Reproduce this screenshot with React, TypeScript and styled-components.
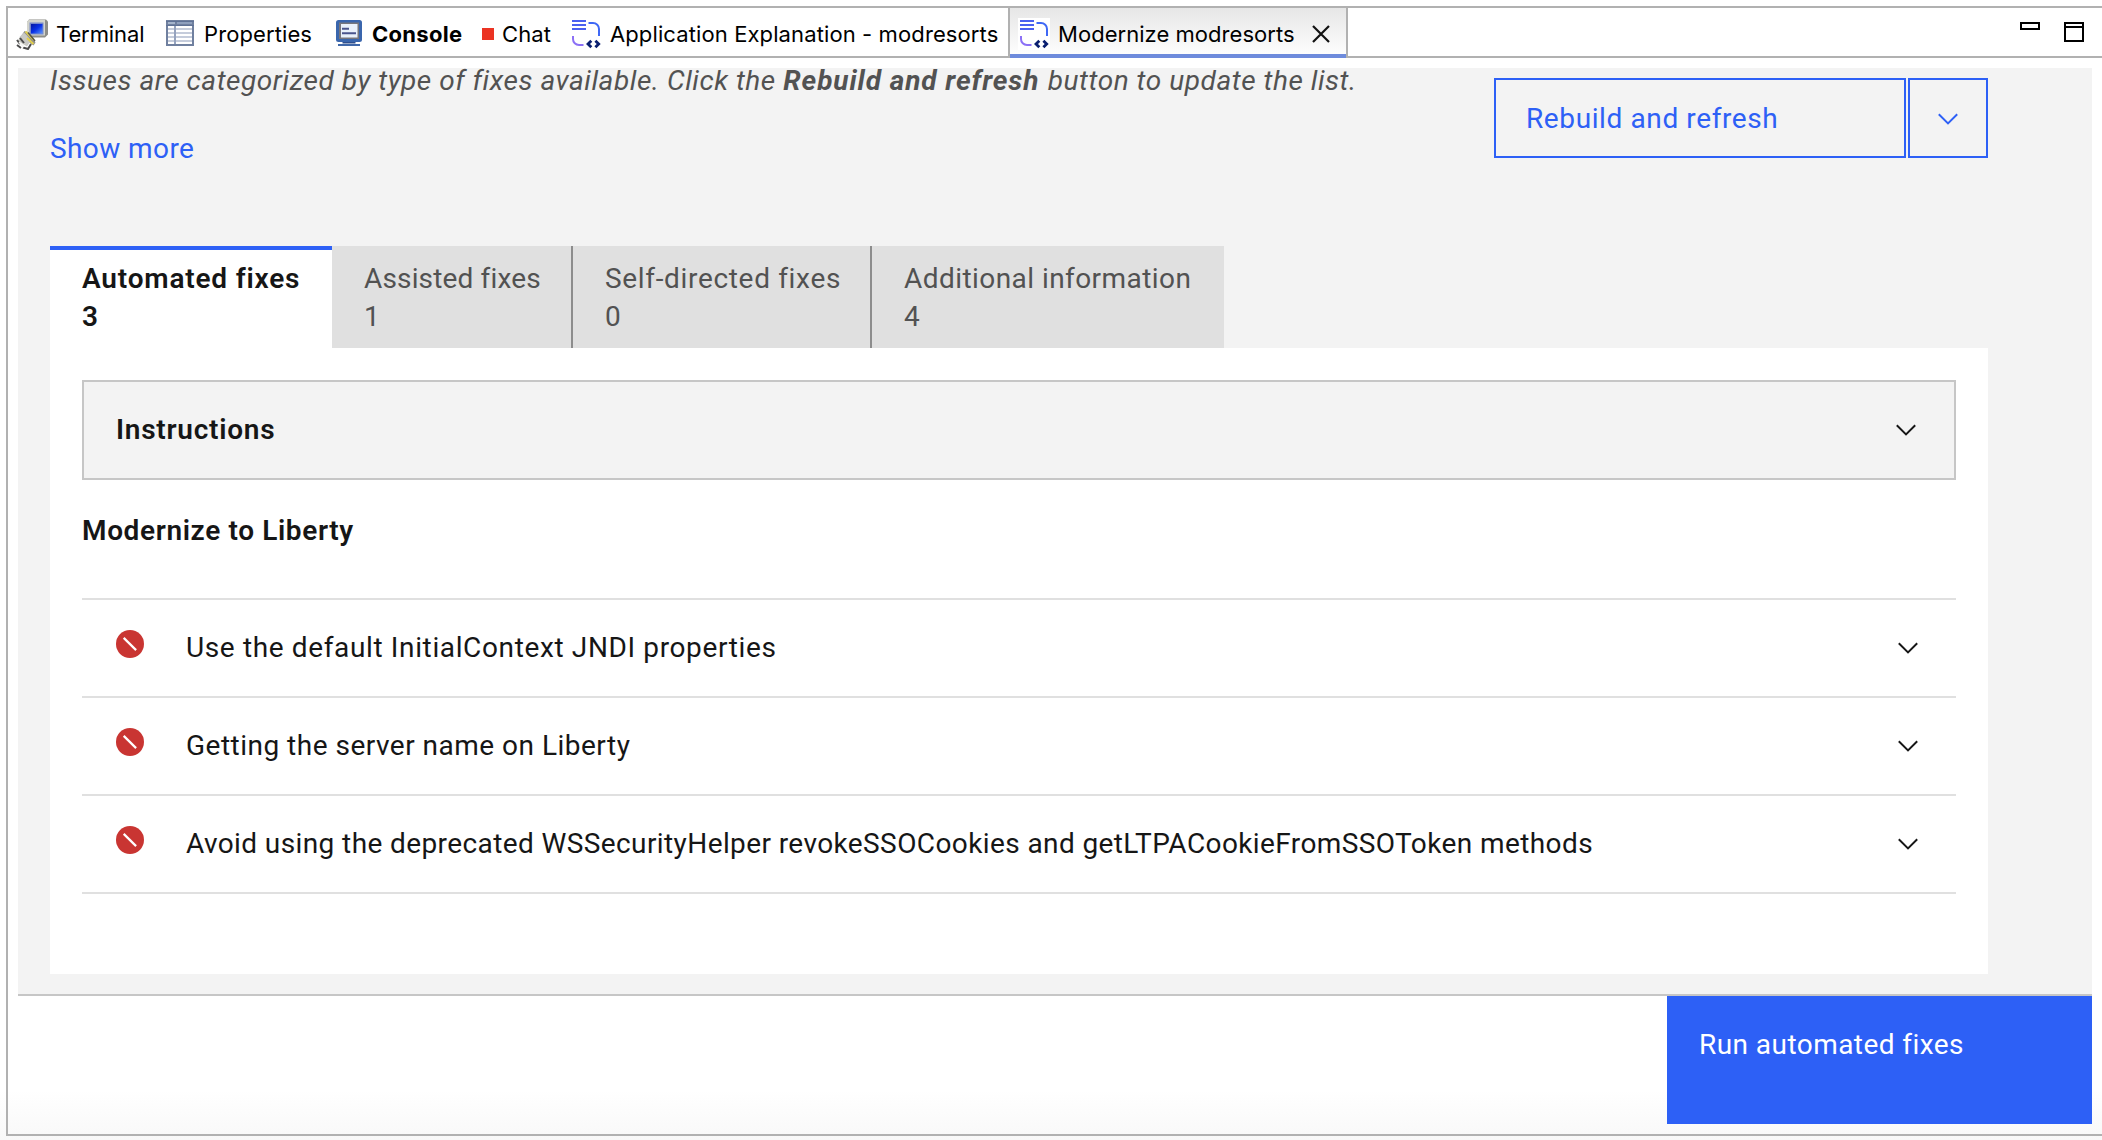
import React from "react";
import styled, { createGlobalStyle, css } from "styled-components";

const GlobalStyle = createGlobalStyle`
  *, *::before, *::after { box-sizing: border-box; }
  body {
    margin: 0;
    overflow: hidden;
    background: #fff;
    font-family: Roboto, "Noto Sans", sans-serif;
  }
  button { font: inherit; border-radius: 0; cursor: pointer; }
`;

const Screen = styled.div`
  height: 1140px;
  padding: 6px 0 4px 6px;
  background: linear-gradient(#fff 0, #fff 1090px, #f8f8f8 1140px);
`;

const Frame = styled.div`
  display: flex;
  flex-direction: column;
  height: 100%;
  border: 2px solid #b1b1b1;
  border-right: none;
`;

/* ---------- view tab bar ---------- */

const ViewBar = styled.div`
  display: flex;
  flex: 0 0 50px;
  min-height: 0;
  padding-left: 8px;
  background: #fff;
  border-bottom: 2px solid #b1b1b1;
`;

const ViewTab = styled.div<{ $width: number; $gap?: number; $active?: boolean }>`
  display: flex;
  align-items: center;
  gap: ${(p) => p.$gap ?? 8}px;
  flex: 0 0 ${(p) => p.$width}px;
  height: 48px;
  padding-top: 4px;
  ${(p) =>
    p.$active &&
    css`
      height: 50px;
      padding: 4px 16px 2px 8px;
      border: solid #b1b1b1;
      border-width: 0 2px;
      background: linear-gradient(#6e8bdc, #6e8bdc) 0 100% / 100% 4px no-repeat,
        linear-gradient(#e6e6e6, #ffffff);
    `}
`;

const ViewLabel = styled.span<{ $spacing?: number; $bold?: boolean }>`
  font-family: Inter, "Noto Sans", sans-serif;
  font-size: 22px;
  line-height: 28px;
  font-weight: ${(p) => (p.$bold ? 700 : 400)};
  letter-spacing: ${(p) => p.$spacing ?? 0}px;
  white-space: nowrap;
  color: #000;
`;

const IconSlot = styled.span<{ $filled?: boolean }>`
  display: flex;
  flex: 0 0 32px;
  height: 32px;
  background: ${(p) => (p.$filled ? "#fff" : "transparent")};
`;

const ChatMark = styled.span`
  flex: 0 0 12px;
  height: 12px;
  background: #eb3323;
`;

const CloseButton = styled.span`
  display: flex;
  margin-left: auto;
`;

const WindowControls = styled.div`
  display: flex;
  gap: 24px;
  margin-left: auto;
  padding: 14px 18px 0 0;
`;

/* ---------- page ---------- */

const Content = styled.div`
  display: flex;
  flex: 1;
  flex-direction: column;
  padding: 10px;
`;

const Page = styled.div`
  flex: 0 0 928px;
  padding: 0 104px 0 32px;
  background: #f3f3f3;
  border-bottom: 2px solid #c6c6c6;
`;

const PageHeader = styled.div`
  display: flex;
  justify-content: space-between;
  align-items: flex-start;
  height: 178px;
`;

const Intro = styled.div`
  margin-top: -5px;
`;

const IntroText = styled.p`
  margin: 0;
  font-size: 28px;
  line-height: 36px;
  font-style: italic;
  letter-spacing: 0.54px;
  white-space: nowrap;
  color: #525252;

  strong {
    margin-right: 1px;
    font-weight: 700;
    letter-spacing: 0.92px;
  }
`;

const ShowMore = styled.a`
  display: inline-block;
  margin-top: 32px;
  font-size: 28px;
  line-height: 36px;
  letter-spacing: 0.41px;
  color: #2d60f6;
`;

const ButtonGroup = styled.div`
  display: flex;
  gap: 2px;
  margin-top: 10px;
`;

const OutlineButton = styled.button<{ $width: number }>`
  display: flex;
  align-items: center;
  justify-content: ${(p) => (p.$width > 100 ? "flex-start" : "center")};
  width: ${(p) => p.$width}px;
  height: 80px;
  padding: 2px ${(p) => (p.$width > 100 ? 30 : 0)}px 0;
  border: 2px solid #2d60f6;
  background: transparent;
  font-size: 28px;
  line-height: 36px;
  letter-spacing: 0.61px;
  color: #2d60f6;
`;

/* ---------- category tabs ---------- */

const Tabs = styled.div`
  display: flex;
  height: 102px;
`;

const Tab = styled.div<{ $width: number; $spacing: number; $active?: boolean; $divider?: boolean }>`
  flex: 0 0 ${(p) => p.$width}px;
  padding: 14px 0 0 32px;
  border-right: ${(p) => (p.$divider ? "2px solid #8d8d8d" : "none")};
  background: ${(p) => (p.$active ? "#fff" : "#e0e0e0")};
  box-shadow: ${(p) => (p.$active ? "inset 0 4px #2d60f6" : "none")};
  color: ${(p) => (p.$active ? "#161616" : "#525252")};
  font-size: 28px;
  font-weight: ${(p) => (p.$active ? 600 : 400)};
  line-height: 38px;
  letter-spacing: ${(p) => p.$spacing}px;
  white-space: nowrap;
`;

const TabLine = styled.div``;

const Panel = styled.div`
  height: 626px;
  padding: 32px;
  background: #fff;
`;

const Instructions = styled.div`
  display: flex;
  align-items: center;
  justify-content: space-between;
  height: 100px;
  padding: 0 38px 0 32px;
  border: 2px solid #c6c6c6;
  background: #f3f3f3;
  font-size: 28px;
  font-weight: 600;
  line-height: 36px;
  letter-spacing: 0.75px;
  color: #161616;
`;

const Heading = styled.h3`
  margin: 33px 0 49px;
  font-size: 28px;
  font-weight: 600;
  line-height: 36px;
  letter-spacing: 0.63px;
  color: #161616;
`;

const IssueList = styled.ul`
  margin: 0;
  padding: 0;
  list-style: none;
  border-bottom: 2px solid #e0e0e0;
`;

const IssueRow = styled.li`
  display: flex;
  align-items: center;
  height: 98px;
  padding: 0 38px 0 34px;
  border-top: 2px solid #e0e0e0;
`;

const IssueMark = styled.span`
  display: flex;
  margin: 0 42px 8px 0;
`;

const IssueTitle = styled.span<{ $spacing: number }>`
  flex: 1;
  font-size: 28px;
  line-height: 36px;
  letter-spacing: ${(p) => p.$spacing}px;
  white-space: nowrap;
  color: #161616;
`;

const Footer = styled.div`
  display: flex;
  justify-content: flex-end;
  height: 128px;
`;

const RunButton = styled.button`
  display: flex;
  align-items: flex-start;
  width: 425px;
  padding: 31px 32px;
  border: none;
  background: #2d60f6;
  font-size: 28px;
  line-height: 36px;
  letter-spacing: 0.44px;
  color: #fff;
`;

/* ---------- icons ---------- */

const TerminalIcon = () => (
  <svg width="32" height="32" viewBox="0 0 32 32">
    <defs>
      <linearGradient id="screen" x1="0" y1="0" x2="1" y2="1">
        <stop offset="0" stopColor="#0517a0" />
        <stop offset="0.5" stopColor="#0a32e6" />
        <stop offset="1" stopColor="#5a96ff" />
      </linearGradient>
    </defs>
    <path d="M13 1.5h17l2 2v13l-3 3H15l-4-3V4z" fill="#8d8e88" />
    <path d="M12.5 2H29v15.500H14.500l-3.500-2.500V4z" fill="#d3d4cc" />
    <rect x="13.500" y="4.500" width="14" height="12" fill="#7889c8" />
    <rect x="15" y="6" width="11.500" height="9.500" fill="url(#screen)" />
    <path d="M8.500 13l4 2 5 6 2 3.500-2 3-7-5-5-5z" fill="#8f8f8b" />
    <path d="M8 14.500l3 3 4 5-4 6-5-3-4-3 2-4z" fill="#c9c9c4" />
    <path d="M9.500 13.500l8.500 8.500M11 20l6.500 6" stroke="#e2cf4e" strokeWidth="2" />
    <path d="M12 14.500l7 8.500" stroke="#54544a" strokeWidth="1.500" />
    <path d="M1 22l3 4M4 20l4 5M1 27l4 3M7 29.500l5 1.500 3-5" stroke="#4b4b4b" strokeWidth="2" fill="none" />
    <path d="M3 24l5 5" stroke="#f2f2ee" strokeWidth="1.500" />
  </svg>
);

const PropertiesIcon = () => (
  <svg width="32" height="32" viewBox="0 0 32 32" shapeRendering="crispEdges">
    <rect x="2" y="2" width="28" height="26" fill="#70809f" />
    <rect x="4" y="4" width="7" height="2" fill="#a5b4cb" />
    <rect x="13" y="4" width="15" height="2" fill="#8fa0bd" />
    <rect x="4" y="8" width="24" height="18" fill="#fff" />
    <path d="M4 11h24M4 15h24M4 19h24M4 23h24" stroke="#c5ccdb" strokeWidth="2" />
    <path d="M11 7v19" stroke="#96a3be" strokeWidth="2" />
    <path d="M2 3h28M2 7h28" stroke="#5f7296" strokeWidth="1" />
  </svg>
);

const ConsoleIcon = () => (
  <svg width="32" height="32" viewBox="0 0 32 32">
    <rect x="3" y="2" width="26" height="22" rx="2.500" fill="#3a66ad" />
    <rect x="6" y="4.500" width="20" height="16.500" fill="#77767c" />
    <rect x="8" y="6" width="16.500" height="13.500" fill="#e9f1fb" />
    <path d="M9 10.700h7M9 15.300h14" stroke="#49548c" strokeWidth="2" />
    <path d="M9.500 24h13v1.500h-13z" fill="#2f4f8d" />
    <path d="M5 26h22v2H5z" fill="#4068a9" />
  </svg>
);

const ModernizeIcon = () => (
  <svg width="32" height="32" viewBox="0 0 32 32" fill="none" strokeWidth="2">
    <path d="M2 3h14M2 7h14M2 11h14" stroke="#4a60f0" />
    <path d="M18.500 5H23a6 6 0 0 1 6 6v7" stroke="#3f68f5" />
    <path d="M3 18v3a6 6 0 0 0 6 6h4.500" stroke="#8c70f6" />
    <path d="M21.300 22.700L18 26l3.300 3.300M25.400 22.700l3.300 3.300-3.300 3.300" stroke="#0a1f70" strokeWidth="2.800" />
  </svg>
);

const CloseIcon = () => (
  <svg width="18" height="18" viewBox="0 0 18 18">
    <path d="M1 1l16 16M17 1L1 17" stroke="#111" strokeWidth="2.200" />
  </svg>
);

const MinimizeIcon = () => (
  <svg width="20" height="20" viewBox="0 0 20 20">
    <rect x="1" y="1" width="18" height="6" fill="#fff" stroke="#000" strokeWidth="2" />
  </svg>
);

const MaximizeIcon = () => (
  <svg width="20" height="20" viewBox="0 0 20 20">
    <path d="M1 1h18v18H1zM1 5h18" fill="none" stroke="#000" strokeWidth="2" />
  </svg>
);

const Chevron = ({ color = "#161616" }: { color?: string }) => (
  <svg width="20" height="12" viewBox="0 0 20 12">
    <path d="M0.800 1.300L10 10.400l9.200-9.100" fill="none" stroke={color} strokeWidth="2" />
  </svg>
);

const BlockedIcon = () => (
  <svg width="28" height="28" viewBox="0 0 28 28">
    <circle cx="14" cy="14" r="14" fill="#c93532" />
    <path d="M7.700 7.900l12.400 12.200" stroke="#fff" strokeWidth="2.200" />
  </svg>
);

const categories = [
  { label: "Automated fixes", count: 3, width: 282, spacing: 0.8, active: true },
  { label: "Assisted fixes", count: 1, width: 241, spacing: 0.16, divider: true },
  { label: "Self-directed fixes", count: 0, width: 299, spacing: 0.67, divider: true },
  { label: "Additional information", count: 4, width: 352, spacing: 0.44 },
];

const issues = [
  { title: "Use the default InitialContext JNDI properties", spacing: 0.63 },
  { title: "Getting the server name on Liberty", spacing: 0.49 },
  {
    title: "Avoid using the deprecated WSSecurityHelper revokeSSOCookies and getLTPACookieFromSSOToken methods",
    spacing: 0.4,
  },
];

export default function App() {
  return (
    <Screen>
      <GlobalStyle />
      <Frame>
        <ViewBar>
          <ViewTab $width={148}>
            <IconSlot><TerminalIcon /></IconSlot>
            <ViewLabel $spacing={-0.1}>Terminal</ViewLabel>
          </ViewTab>
          <ViewTab $width={169}>
            <IconSlot><PropertiesIcon /></IconSlot>
            <ViewLabel $spacing={0.1}>Properties</ViewLabel>
          </ViewTab>
          <ViewTab $width={149} $gap={7}>
            <IconSlot><ConsoleIcon /></IconSlot>
            <ViewLabel $bold $spacing={0.29}>Console</ViewLabel>
          </ViewTab>
          <ViewTab $width={88}>
            <ChatMark />
            <ViewLabel $spacing={0.1}>Chat</ViewLabel>
          </ViewTab>
          <ViewTab $width={438}>
            <IconSlot><ModernizeIcon /></IconSlot>
            <ViewLabel $spacing={0.11}>Application Explanation - modresorts</ViewLabel>
          </ViewTab>
          <ViewTab $width={340} $active>
            <IconSlot $filled><ModernizeIcon /></IconSlot>
            <ViewLabel $spacing={0.04}>Modernize modresorts</ViewLabel>
            <CloseButton><CloseIcon /></CloseButton>
          </ViewTab>
          <WindowControls>
            <MinimizeIcon />
            <MaximizeIcon />
          </WindowControls>
        </ViewBar>
        <Content>
          <Page>
            <PageHeader>
              <Intro>
                <IntroText>
                  Issues are categorized by type of fixes available. Click the{" "}
                  <strong>Rebuild and refresh</strong> button to update the list.
                </IntroText>
                <ShowMore>Show more</ShowMore>
              </Intro>
              <ButtonGroup>
                <OutlineButton $width={412}>Rebuild and refresh</OutlineButton>
                <OutlineButton $width={80}><Chevron color="#2d60f6" /></OutlineButton>
              </ButtonGroup>
            </PageHeader>
            <Tabs>
              {categories.map((c) => (
                <Tab key={c.label} $width={c.width} $spacing={c.spacing} $active={c.active} $divider={c.divider}>
                  <TabLine>{c.label}</TabLine>
                  <TabLine>{c.count}</TabLine>
                </Tab>
              ))}
            </Tabs>
            <Panel>
              <Instructions>
                Instructions
                <Chevron />
              </Instructions>
              <Heading>Modernize to Liberty</Heading>
              <IssueList>
                {issues.map((issue) => (
                  <IssueRow key={issue.title}>
                    <IssueMark><BlockedIcon /></IssueMark>
                    <IssueTitle $spacing={issue.spacing}>{issue.title}</IssueTitle>
                    <Chevron />
                  </IssueRow>
                ))}
              </IssueList>
            </Panel>
          </Page>
          <Footer>
            <RunButton>Run automated fixes</RunButton>
          </Footer>
        </Content>
      </Frame>
    </Screen>
  );
}
